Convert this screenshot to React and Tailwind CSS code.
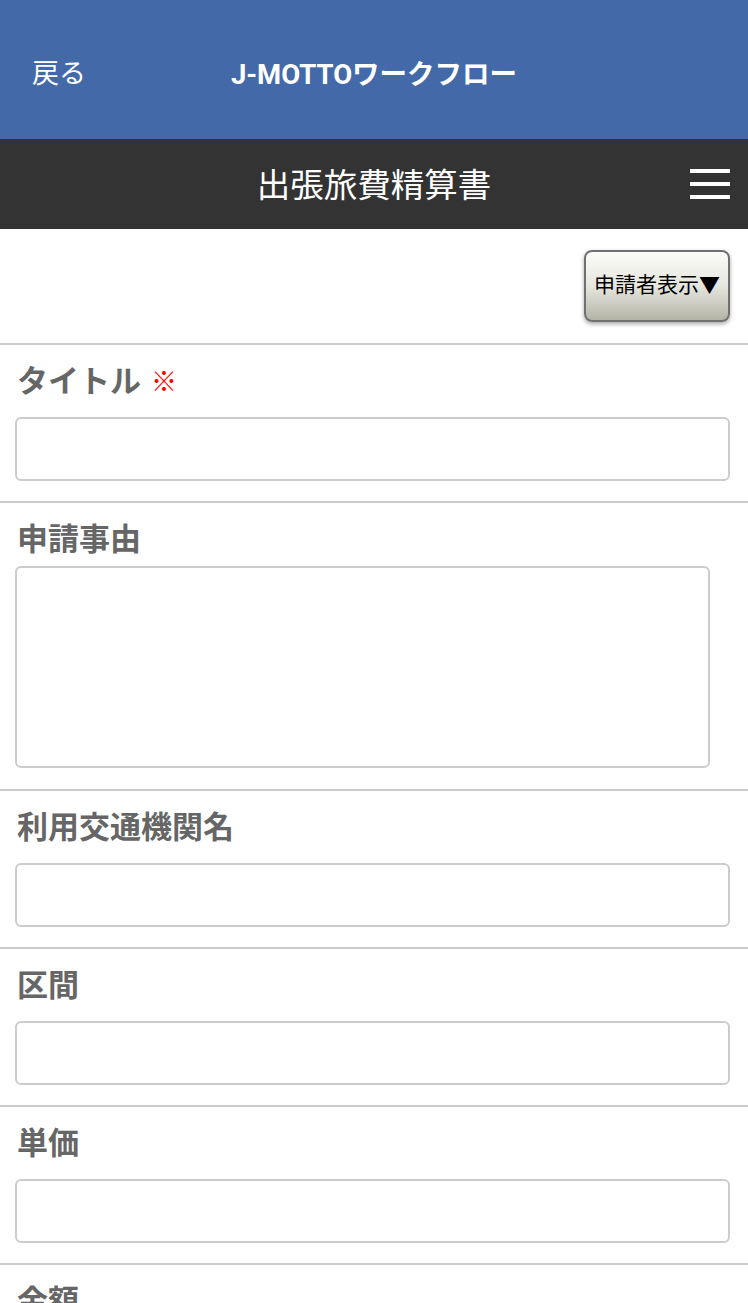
import React from "react";

function Field({ label, required }) {
  return (
    <div className="border-t-2 border-[#cccccc] pl-[15px] pr-[18px] pt-[16px] pb-[20px]">
      <div className="h-[42px] leading-[42px] pl-[2px] text-[31px] font-bold text-[#666666] flex items-center">
        <span>{label}</span>
        {required && <span className="ml-[10px] text-[26px] font-normal text-[#ff0000]">※</span>}
      </div>
      <div className="mt-[14px] h-[64px] w-full rounded-[6px] border-2 border-[#cccccc] bg-white" />
    </div>
  );
}

export default function App() {
  return (
    <div className="w-[748px] min-h-screen bg-white font-['Roboto','Noto_Sans_CJK_JP',sans-serif]">
      <div className="h-[139px] bg-[#4469a8] grid grid-cols-[1fr_auto_1fr] items-center pt-[10px] text-white">
        <div className="pl-[32px] text-[27px] font-normal">戻る</div>
        <div className="text-[27.5px] font-bold">J-MOTTOワークフロー</div>
        <div />
      </div>
      <div className="h-[90px] bg-[#333333] grid grid-cols-[1fr_auto_1fr] items-center text-white">
        <div />
        <div className="text-[33.5px] font-normal pt-[4px]">出張旅費精算書</div>
        <div className="flex justify-end pr-[18px]">
          <div className="flex flex-col gap-[9px] w-[40px]">
            <div className="h-[4px] bg-white" />
            <div className="h-[4px] bg-white" />
            <div className="h-[4px] bg-white" />
          </div>
        </div>
      </div>
      <div className="h-[114px] flex justify-end items-start pt-[21px] pr-[18px]">
        <div className="w-[146px] h-[72px] rounded-[8px] border-2 border-[#707070] bg-gradient-to-b from-[#fbfbf8] via-[#e6e6df] to-[#b4b4a6] shadow-[0_2px_4px_rgba(0,0,0,0.35)] flex items-center justify-center text-[21px] text-black">
          申請者表示▼
        </div>
      </div>
      <Field label="タイトル" required />
      <div className="border-t-2 border-[#cccccc] px-[15px] pt-[16px] pb-[21px]">
        <div className="h-[42px] leading-[42px] pl-[2px] text-[31px] font-bold text-[#666666]">申請事由</div>
        <div className="mt-[5px] h-[202px] w-[695px] rounded-[6px] border-2 border-[#cccccc] bg-white" />
      </div>
      <Field label="利用交通機関名" />
      <Field label="区間" />
      <Field label="単価" />
      <Field label="金額" />
    </div>
  );
}
